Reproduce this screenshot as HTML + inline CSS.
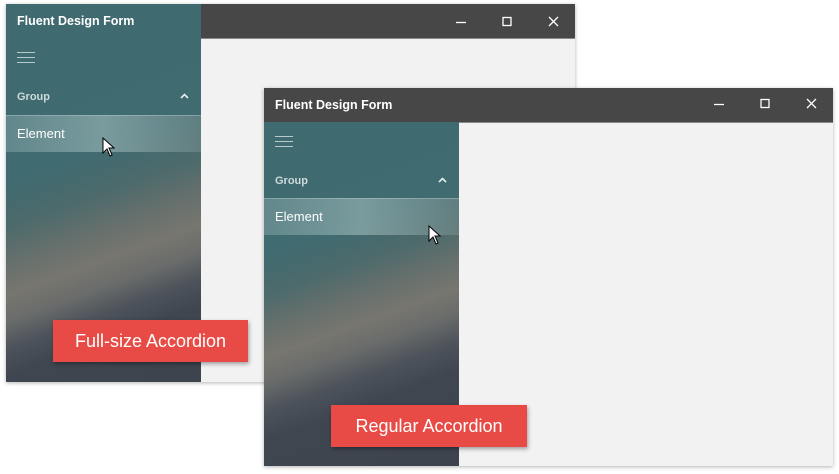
<!DOCTYPE html>
<html><head><meta charset="utf-8"><style>
body{margin:0;width:839px;height:474px;background:#fff;position:relative;overflow:hidden;font-family:"Liberation Sans",sans-serif}
.win{position:absolute;width:569px;height:378px;background:#f2f2f2;box-shadow:0 1px 4px rgba(0,0,0,.3)}
.tb{position:absolute;left:0;top:0;right:0;height:34px;background:#474747;border-bottom:1px solid #8a8a8a}
.side{position:absolute;left:0;top:0;width:195px;bottom:0;
background:linear-gradient(160deg,#3e6a70 0%,#3f6b71 40%,#4d6a6b 50%,#66706d 58%,#77766f 65%,#6a6c6b 71%,#4d535b 77%,#3f4650 83%,#3d444e 100%)}
.side2{background:linear-gradient(160deg,#3e6a70 0%,#3f6b71 32%,#4d6a6b 42%,#66706d 50%,#77766f 57%,#6a6c6b 63%,#4d535b 70%,#3f4650 77%,#3d444e 100%)}
.title{position:absolute;left:11px;top:10px;color:#fff;font-weight:bold;font-size:12.5px}
.ham{position:absolute;left:11px;width:18px;height:1px;background:#b9cacc}
.grp{position:absolute;left:11px;color:#cfdadb;font-weight:bold;font-size:11px}
.car{position:absolute;left:174px}
.el{position:absolute;left:0;width:195px;height:36px;background:linear-gradient(90deg,rgba(140,170,172,.45),rgba(170,195,195,.55) 50%,rgba(130,150,150,.45));border-top:1px solid rgba(200,220,220,.35)}
.el span{position:absolute;left:11px;top:10px;color:#fff;font-size:13px}
.badge{position:absolute;width:195px;height:42px;background:#e84b45;color:#fff;font-size:18px;text-align:center;line-height:42px;box-shadow:1px 2px 4px rgba(0,0,0,.35)}
</style></head><body>

<div class="win" style="left:6px;top:4px">
 <div class="tb"></div>
 <div class="side">
  <div class="title">Fluent Design Form</div>
  <div class="ham" style="top:48px"></div><div class="ham" style="top:53px"></div><div class="ham" style="top:58px"></div>
  <div class="grp" style="top:87px">Group</div>
  <svg class="car" style="top:89px" width="10" height="7"><path d="M1 5L4.5 1.5L8 5" stroke="#e6eeee" stroke-width="1.6" fill="none"/></svg>
  <div class="el" style="top:111px"><span>Element</span></div>
 </div>
 <svg style="position:absolute;left:449px;top:11px" width="120" height="14"><g stroke="#fff" stroke-width="1.3" fill="none"><line x1="1" y1="7.5" x2="11" y2="7.5"/><rect x="48" y="2.5" width="8" height="8"/><path d="M94 2L103 11M103 2L94 11"/></g></svg>
 <svg style="position:absolute;left:96px;top:133px" width="16" height="22"><path d="M1 1L1 16L5 12L8 19L10 18L7 11L12 11Z" fill="#fff" stroke="#000" stroke-width="1"/></svg>
</div>

<div class="win" style="left:264px;top:88px">
 <div class="tb"></div>
 <div class="side side2" style="top:34px">
  <div class="ham" style="top:14px"></div><div class="ham" style="top:19px"></div><div class="ham" style="top:24px"></div>
  <div class="grp" style="top:53px">Group</div>
  <svg class="car" style="top:55px" width="10" height="7"><path d="M1 5L4.5 1.5L8 5" stroke="#e6eeee" stroke-width="1.6" fill="none"/></svg>
  <div class="el" style="top:76px"><span>Element</span></div>
 </div>
 <div class="title">Fluent Design Form</div>
 <svg style="position:absolute;left:449px;top:9px" width="120" height="14"><g stroke="#fff" stroke-width="1.3" fill="none"><line x1="1" y1="7.5" x2="11" y2="7.5"/><rect x="48" y="2.5" width="8" height="8"/><path d="M94 2L103 11M103 2L94 11"/></g></svg>
 <svg style="position:absolute;left:164px;top:137px" width="16" height="22"><path d="M1 1L1 16L5 12L8 19L10 18L7 11L12 11Z" fill="#fff" stroke="#000" stroke-width="1"/></svg>
</div>

<div class="badge" style="left:53px;top:320px">Full-size Accordion</div>
<div class="badge" style="left:331px;top:405px;width:196px">Regular Accordion</div>
</body></html>
